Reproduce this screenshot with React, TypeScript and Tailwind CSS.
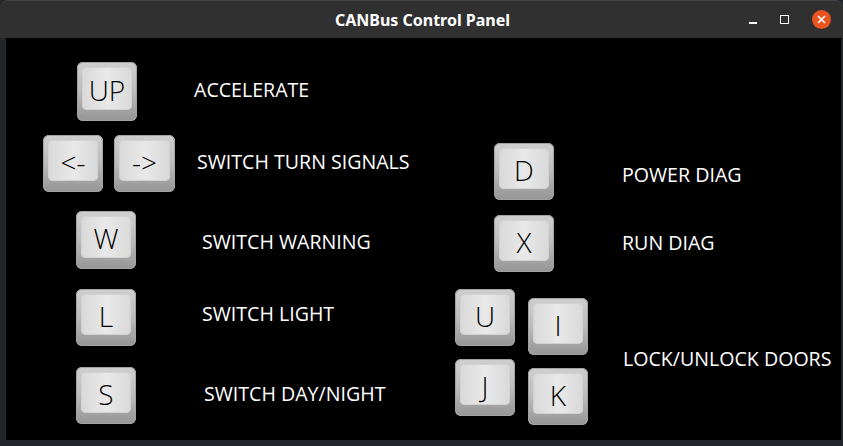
import React from 'react';

const Key = ({ label, className = '' }: { label: string; className?: string }) => (
  <div
    className={`w-[60px] h-[57px] shrink-0 rounded-[6px] bg-gradient-to-b from-[#cfcfcf] via-[#bcbcbc] to-[#959595] pt-[5px] px-[5px] pb-[11px] shadow-[inset_0_0_0_1px_#a3a3a3] ${className}`}
  >
    <div className="w-full h-full rounded-[5px] bg-gradient-to-r from-[#d9d9d9] via-[#e9e9e9] to-[#d9d9d9] shadow-[inset_0_0_0_1px_#d2d2d2] flex items-center justify-center">
      <span className="text-[28px] leading-none text-black font-['Open_Sans',sans-serif] font-light mt-[2px]">{label}</span>
    </div>
  </div>
);

const Label = ({ text, className = '' }: { text: string; className?: string }) => (
  <span className={`text-[19.6px] leading-[28px] text-white whitespace-nowrap font-['Open_Sans',sans-serif] ${className}`}>{text}</span>
);

export default function App() {
  return (
    <div className="w-[843px] h-[446px] bg-[#22252a] flex flex-col font-['Open_Sans',sans-serif] overflow-hidden">
      {/* title bar */}
      <div className="h-[38px] shrink-0 rounded-t-[8px] bg-[#303030] border-t border-[#444] flex items-center relative">
        <span className="flex-1 text-center text-white font-bold text-[16px] font-['Noto_Sans',sans-serif] pl-[2px]">
          CANBus Control Panel
        </span>
        <div className="absolute right-[12px] top-0 h-full flex items-center gap-[23px]">
          <div className="w-[8px] h-[2px] bg-white mt-[6px]" />
          <div className="w-[9px] h-[9px] border-[1.5px] border-white" />
          <div className="w-[19px] h-[19px] rounded-full bg-[#e95420] flex items-center justify-center">
            <svg width="9" height="9" viewBox="0 0 9 9">
              <path d="M1 1 L8 8 M8 1 L1 8" stroke="white" strokeWidth="1.6" />
            </svg>
          </div>
        </div>
      </div>

      {/* content */}
      <div className="ml-[6px] mr-[2px] h-[402px] bg-black flex">
        {/* left column */}
        <div className="w-[434px] shrink-0 flex flex-col">
          <div className="flex items-center mt-[24px]">
            <Key label="UP" className="ml-[71px] h-[59px]" />
            <Label text="ACCELERATE" className="ml-[57px] -mt-[3px]" />
          </div>
          <div className="flex items-center mt-[14px]">
            <Key label="<-" className="ml-[37px] w-[59px]" />
            <Key label="->" className="ml-[11px] w-[61px]" />
            <Label text="SWITCH TURN SIGNALS" className="ml-[22px] -mt-[3px]" />
          </div>
          <div className="flex items-center mt-[19px]">
            <Key label="W" className="ml-[70px] h-[58px]" />
            <Label text="SWITCH WARNING" className="ml-[66px] mt-[4px]" />
          </div>
          <div className="flex items-center mt-[20px]">
            <Key label="L" className="ml-[70px] h-[56px]" />
            <Label text="SWITCH LIGHT" className="ml-[66px] -mt-[8px]" />
          </div>
          <div className="flex items-center mt-[21px]">
            <Key label="S" className="ml-[70px] h-[56px]" />
            <Label text="SWITCH DAY/NIGHT" className="ml-[68px] -mt-[4px]" />
          </div>
        </div>

        {/* right column */}
        <div className="flex flex-col">
          <div className="flex items-center mt-[105px]">
            <Key label="D" className="ml-[54px] h-[56px]" />
            <Label text="POWER DIAG" className="ml-[68px] mt-[6px]" />
          </div>
          <div className="flex items-center mt-[15px]">
            <Key label="X" className="ml-[54px] h-[56px]" />
            <Label text="RUN DIAG" className="ml-[68px] -mt-[2px]" />
          </div>
          <div className="flex items-center mt-[17px]">
            <div className="flex ml-[15px] gap-[13px]">
              <div className="flex flex-col gap-[13px]">
                <Key label="U" className="w-[59px] h-[56px]" />
                <Key label="J" className="w-[59px] h-[57px]" />
              </div>
              <div className="flex flex-col gap-[13px] mt-[9px]">
                <Key label="I" className="h-[56px]" />
                <Key label="K" className="h-[56px]" />
              </div>
            </div>
            <Label text="LOCK/UNLOCK DOORS" className="ml-[35px] mt-[4px]" />
          </div>
        </div>
      </div>
    </div>
  );
}
